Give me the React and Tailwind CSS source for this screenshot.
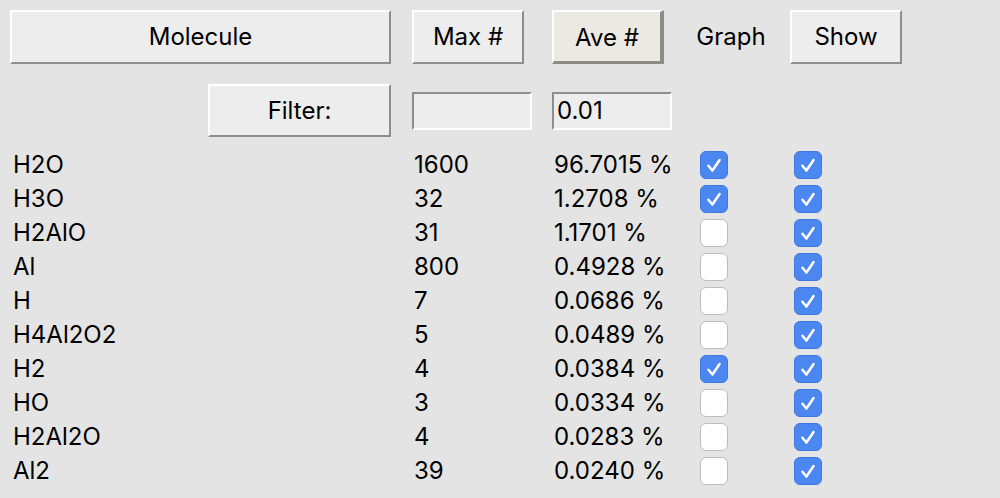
import React from "react";

const rows = [
  ["H2O", "1600", "96.7015 %", true, true],
  ["H3O", "32", "1.2708 %", true, true],
  ["H2AlO", "31", "1.1701 %", false, true],
  ["Al", "800", "0.4928 %", false, true],
  ["H", "7", "0.0686 %", false, true],
  ["H4Al2O2", "5", "0.0489 %", false, true],
  ["H2", "4", "0.0384 %", true, true],
  ["HO", "3", "0.0334 %", false, true],
  ["H2Al2O", "4", "0.0283 %", false, true],
  ["Al2", "39", "0.0240 %", false, true],
];

function Box({ checked }) {
  if (checked) {
    return (
      <div className="w-[28px] h-[28px] rounded-[6px] bg-[#4b86f1] border border-[#3f78e0] flex items-center justify-center">
        <svg width="28" height="28" viewBox="0 0 28 28">
          <path d="M8 14.8 L12.3 20 L20 8.6" fill="none" stroke="white" strokeWidth="2.7" strokeLinecap="round" strokeLinejoin="round" />
        </svg>
      </div>
    );
  }
  return <div className="w-[28px] h-[28px] rounded-[6px] bg-white border border-[#bdbdbd]" />;
}

const btn =
  "flex items-center justify-center bg-[#ededed] border-t-2 border-l-2 border-r-2 border-b-2 border-t-white border-l-white border-r-[#8e8e8e] border-b-[#8e8e8e] text-black";

export default function App() {
  return (
    <div
      className="w-[1000px] h-[498px] bg-[#e4e4e4] text-black text-[24px] leading-none overflow-hidden"
      style={{ fontFamily: 'Inter, "Liberation Sans", sans-serif' }}
    >
      <div className="flex items-center pl-[10px] pt-[10px]">
        <div className={`${btn} w-[381px] h-[54px]`}>Molecule</div>
        <div className={`${btn} w-[112px] h-[54px] ml-[21px]`}>Max #</div>
        <div className="w-[112px] h-[54px] ml-[28px] flex items-center justify-center pt-[3px] bg-[#ece9e3] border-t-2 border-l-2 border-r-[4px] border-b-[3px] border-t-white border-l-white border-r-[#8d8b87] border-b-[#8d8b87]">
          Ave #
        </div>
        <div className="w-[126px] flex justify-center pl-[8px]">Graph</div>
        <div className={`${btn} w-[112px] h-[54px]`}>Show</div>
      </div>
      <div className="flex items-center pl-[208px] mt-[20px]">
        <div className={`${btn} w-[183px] h-[53px]`}>Filter:</div>
        <div className="w-[120px] h-[38px] ml-[21px] bg-[#ededed] border-2 border-t-[#8e8e8e] border-l-[#8e8e8e] border-r-white border-b-white" />
        <div className="w-[120px] h-[38px] ml-[20px] bg-[#ededed] border-2 border-t-[#8e8e8e] border-l-[#8e8e8e] border-r-white border-b-white flex items-center pl-[3px]">
          0.01
        </div>
      </div>
      <div className="flex flex-col mt-[11px]">
        {rows.map(([name, num, pct, g, s]) => (
          <div key={name} className="flex items-center h-[34px] pl-[13px]">
            <div className="w-[401px]">{name}</div>
            <div className="w-[140px]">{num}</div>
            <div className="w-[146px]">{pct}</div>
            <div className="w-[94px]">
              <Box checked={g} />
            </div>
            <div>
              <Box checked={s} />
            </div>
          </div>
        ))}
      </div>
    </div>
  );
}
